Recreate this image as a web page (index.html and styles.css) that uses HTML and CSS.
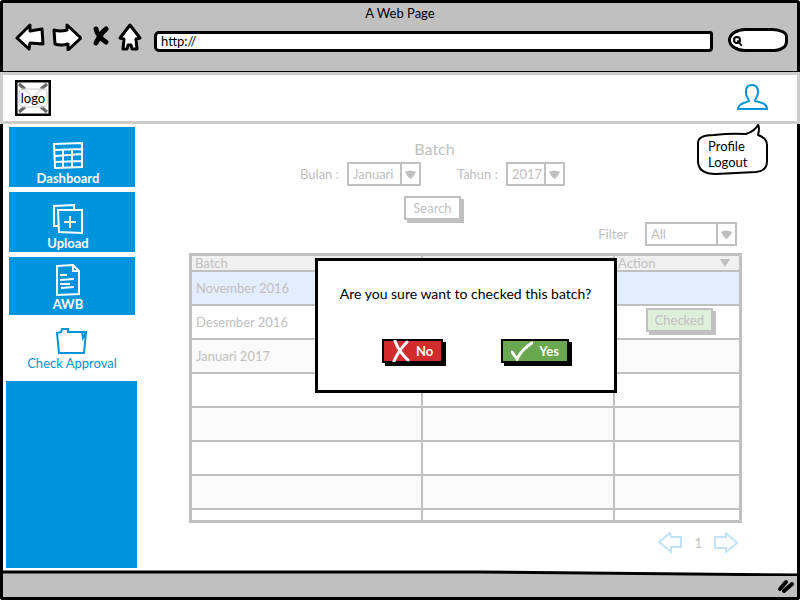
FILE: index.html
```
<!DOCTYPE html>
<html lang="id">
<head>
<meta charset="utf-8">
<meta name="viewport" content="width=device-width, initial-scale=1">
<title>A Web Page</title>
<link rel="stylesheet" href="styles.css">
</head>
<body>
<div class="window">
  <header class="chrome">
    <div class="window-title">A Web Page</div>
    <div class="toolbar">
      <button class="tool" type="button" aria-label="Back"><svg width="30" height="28" viewBox="0 0 30 28"><path d="M2 15 L15 2 V8 L27 6 L28 21 L15 20 L14 26 Z"/></svg></button>
      <button class="tool tool-forward" type="button" aria-label="Forward"><svg width="30" height="28" viewBox="0 0 30 28"><path d="M2 7 Q8 9 15 7 V2 L29 15 L16 27 V21 Q9 23 3 21 Z"/></svg></button>
      <button class="tool tool-stop" type="button" aria-label="Stop"><svg width="18" height="22" viewBox="0 0 18 22"><path class="solid" d="M4 3 Q6 11 14 16 M14 3 Q9 7 4 17"/></svg></button>
      <button class="tool tool-home" type="button" aria-label="Home"><svg width="24" height="28" viewBox="0 0 24 28"><path d="M2 15 L12 2 L22 15 L18 16 L19 26 H14 L13 22 H10 L9 26 H5 L6 16 Z"/></svg></button>
      <input class="address" type="text" value="http://" aria-label="Address">
      <label class="search"><svg width="14" height="16" viewBox="0 0 14 16"><circle cx="6" cy="8" r="3"/><path d="M7 9 L10 13"/></svg><input type="text" aria-label="Web search"></label>
    </div>
  </header>

  <div class="app-bar">
    <a class="logo" href="#">
      <svg width="36" height="36" viewBox="0 0 36 36" aria-hidden="true"><rect x="1" y="1" width="34" height="34" fill="#fff" stroke="#000" stroke-width="3"/><path d="M5 5 L31 31 M31 5 L5 31" stroke="#ccc" stroke-width="3"/><path d="M4 4 L10 9 M32 4 L26 9 M4 32 L10 27 M32 32 L26 27" stroke="#666" stroke-width="3"/><rect x="4" y="9" width="28" height="18" rx="4" fill="#fff" fill-opacity=".6" stroke="#ccc"/></svg>
      <span>logo</span>
    </a>
    <div class="account">
      <button class="avatar" type="button" aria-label="Account"><svg width="32" height="28" viewBox="0 0 32 28"><path d="M2 26 C2 22 5 21 13 18 C13 15 9 14 10 8 C10 3 13 2 16 2 C20 2 22 5 22 9 C22 14 19 15 19 18 C27 20 31 21 31 26 Z"/></svg></button>
      <nav class="bubble" aria-label="Account">
        <svg width="72" height="52" viewBox="0 0 72 52" aria-hidden="true"><path d="M2 20 C2 15 8 12 18 12 Q35 10 50 11 Q59 8 62 2 Q64 4 62 12 Q71 15 71 22 V38 Q71 48 60 49 L20 51 Q2 51 2 38 Z"/></svg>
        <a href="#">Profile</a>
        <a href="#">Logout</a>
      </nav>
    </div>
  </div>

  <div class="content">
    <nav class="sidebar" aria-label="Main">
      <a class="item" href="#"><svg width="32" height="28" viewBox="0 0 32 28"><path d="M2 2 L30 1 V25 L3 26 Z M2 8 L30 7 M3 14 L30 12 M3 20 L30 19 M11 8 V26 M20 8 V25"/></svg>Dashboard</a>
      <a class="item" href="#"><svg width="32" height="31" viewBox="0 0 32 31"><path d="M6 22 L2 22 V2 L22 1 V6 M6 6 L30 6 V29 L7 28 Z M18 12 V24 M12 18 H24"/></svg>Upload</a>
      <a class="item item-awb" href="#"><svg width="26" height="32" viewBox="0 0 26 32"><path d="M2 2 L18 1 L24 7 V30 L2 31 Z M18 1 V7 H24 M5 11 H12 M5 16 L19 15 M5 20 H15 M6 24 L19 23"/></svg>AWB</a>
      <a class="item item-current" href="#" aria-current="page"><svg width="32" height="28" viewBox="0 0 32 28"><path d="M3 26 L1 6 L5 5 L6 2 H12 V5 L30 5 L28 26 Z M26 5 L27 11 L30 5"/></svg>Check Approval</a>
      <div class="sidebar-fill"></div>
    </nav>

    <main class="main">
      <h1>Batch</h1>
      <form class="filters">
        <div class="period">
          <label for="bulan">Bulan :</label>
          <span class="picker"><select id="bulan" class="pick-month"><option>Januari</option></select><svg width="17" height="20" viewBox="0 0 17 20"><path d="M3 8 Q8 5 14 8 Q11 14 8 15 Q5 12 3 8"/></svg></span>
          <label class="year-label" for="tahun">Tahun :</label>
          <span class="picker"><select id="tahun" class="pick-year"><option>2017</option></select><svg width="17" height="20" viewBox="0 0 17 20"><path d="M3 8 Q8 5 14 8 Q11 14 8 15 Q5 12 3 8"/></svg></span>
        </div>
        <button class="button" type="button">Search</button>
        <div class="status">
          <label for="filter">Filter</label>
          <span class="picker"><select id="filter" class="pick-status"><option>All</option></select><svg width="17" height="20" viewBox="0 0 17 20"><path d="M3 8 Q8 5 14 8 Q11 14 8 15 Q5 12 3 8"/></svg></span>
        </div>
      </form>

      <div class="results">
        <table>
          <colgroup><col class="col-batch"><col class="col-mid"><col></colgroup>
          <thead><tr><th>Batch</th><th></th><th><span class="sortable">Action<svg width="10" height="8" viewBox="0 0 10 8"><path d="M0 0 H10 L5 8 Z"/></svg></span></th></tr></thead>
          <tbody>
            <tr class="selected"><td>November 2016</td><td></td><td></td></tr>
            <tr><td>Desember 2016</td><td></td><td class="action"><button class="button button-checked" type="button">Checked</button></td></tr>
            <tr><td>Januari 2017</td><td></td><td></td></tr>
            <tr><td></td><td></td><td></td></tr>
            <tr><td></td><td></td><td></td></tr>
            <tr><td></td><td></td><td></td></tr>
            <tr><td></td><td></td><td></td></tr>
            <tr class="last"><td></td><td></td><td></td></tr>
          </tbody>
        </table>
        <div class="dialog" role="dialog" aria-labelledby="question">
          <p id="question">Are you sure want to checked this batch?</p>
          <div class="choices">
            <button class="choice no" type="button"><svg width="18" height="22" viewBox="0 0 18 22"><path d="M3 1 Q7 12 16 20 M15 2 Q7 10 2 21"/></svg>No</button>
            <button class="choice yes" type="button"><svg width="22" height="20" viewBox="0 0 22 20"><path d="M1 11 L6 18 Q11 8 21 2"/></svg>Yes</button>
          </div>
        </div>
      </div>

      <nav class="pager" aria-label="Pages">
        <button type="button" aria-label="Previous"><svg width="24" height="22" viewBox="0 0 24 22"><path d="M1 10 L12 1 L13 5 L23 5 V15 L13 15 V20 Z"/></svg></button>
        <span>1</span>
        <button type="button" aria-label="Next"><svg width="24" height="22" viewBox="0 0 24 22"><path d="M1 5 L12 5 V1 L23 11 L12 20 V16 L1 16 Z"/></svg></button>
      </nav>
    </main>
  </div>

  <footer class="status-bar">
    <svg class="edge" height="6" viewBox="0 0 800 6" preserveAspectRatio="none"><path d="M0 0 H800 V4 L480 1 H0 Z" fill="#fff"/><path d="M0 2 L480 2 L800 5" fill="none" stroke="#000" stroke-width="3"/></svg>
    <svg class="grip" width="20" height="16" viewBox="0 0 20 16"><path d="M3 11 L9 4 M7 13 L15 6" /></svg>
  </footer>
</div>
</body>
</html>
```
FILE: styles.css
```
* { box-sizing: border-box; }

body {
  margin: 0;
  background: #fff;
  color: #000;
  font: 13px/16px Lato, "Liberation Sans", sans-serif;
}

button, input, select { font: inherit; color: inherit; }
button { cursor: pointer; }
a { color: inherit; text-decoration: none; }
svg { display: block; flex: none; fill: none; }

.window { display: flex; flex-direction: column; min-height: 100vh; }

.chrome {
  height: 72px;
  padding-top: 2px;
  border: 3px solid #000;
  border-bottom-width: 1px;
  border-radius: 3px 3px 0 0;
  background: #c0c0c0;
}
.window-title { text-align: center; }
.toolbar { display: flex; align-items: center; height: 28px; margin-top: 2px; padding: 0 9px 0 12px; }
.tool { padding: 0; border: 0; background: none; }
.tool path { fill: #fff; stroke: #000; stroke-width: 3px; stroke-linejoin: round; }
.tool .solid { fill: none; stroke-width: 5px; stroke-linecap: round; }
.tool-forward { margin-left: 7px; }
.tool-stop { margin-left: 10px; }
.tool-home { margin-left: 8px; }
.address {
  flex: 1;
  min-width: 0;
  height: 21px;
  margin: 8px 15px 0 12px;
  padding: 0 4px;
  border: 3px solid #000;
  border-radius: 5px 3px 4px 5px;
  background: #fff;
}
.search {
  display: flex;
  align-items: center;
  width: 60px;
  height: 24px;
  margin-top: 6px;
  border: 3px solid #000;
  border-radius: 20px 18px 16px 20px / 14px 10px 12px 14px;
  background: #fff;
}
.search svg { stroke: #000; stroke-width: 2px; stroke-linecap: round; }
.search input { width: 100%; min-width: 0; padding: 0; border: 0; background: none; outline: 0; }

.app-bar {
  display: flex;
  align-items: center;
  justify-content: space-between;
  height: 52px;
  padding: 0 29px 0 12px;
  border: 3px solid #ccc;
  background: #fff;
}
.logo { display: grid; place-items: center; }
.logo > * { grid-area: 1 / 1; }
.account { position: relative; }
.avatar { padding: 0; border: 0; background: none; }
.avatar path { stroke: #0094dc; stroke-width: 2px; }
.bubble {
  position: absolute;
  z-index: 2;
  top: 40px;
  right: 0;
  display: flex;
  flex-direction: column;
  width: 72px;
  height: 52px;
  padding: 15px 0 0 12px;
}
.bubble svg { position: absolute; z-index: -1; inset: 0; }
.bubble path { fill: #fff; stroke: #000; stroke-width: 2px; stroke-linejoin: round; }

.content {
  display: flex;
  flex: 1;
  border: solid #000;
  border-width: 0 3px;
}

.sidebar { display: flex; flex-direction: column; gap: 5px; width: 134px; padding: 3px 0 2px 3px; }
.item {
  display: flex;
  flex-direction: column;
  align-items: center;
  justify-content: flex-end;
  height: 60px;
  margin: 0 2px 0 3px;
  padding: 0 8px 1px 0;
  background: #0094dc;
  color: #fff;
  font-weight: 700;
}
.item path { stroke: currentColor; stroke-width: 2px; }
.item-awb { height: 58px; padding-bottom: 3px; }
.item-current { height: 56px; padding: 0 0 5px; background: #fff; color: #0094dc; font-weight: 400; }
.sidebar-fill { flex: 1; background: #0094dc; }

.main { flex: 1; min-width: 0; padding: 16px 55px 0 52px; color: #c0c0c0; }
h1 { margin: 0 62px 0 0; font-size: 16px; font-weight: 400; line-height: 18px; text-align: center; }
.filters { display: flex; flex-direction: column; align-items: center; }
.period { display: flex; align-items: center; gap: 8px; margin: 4px 66px 0 0; }
.year-label { margin-left: 28px; }
.picker { display: flex; border: 2px solid #c0c0c0; }
.picker select {
  height: 20px;
  padding: 0 0 0 4px;
  border: 0;
  border-right: 2px solid #c0c0c0;
  border-radius: 0;
  background: #fff;
  appearance: none;
}
.picker path { fill: #c0c0c0; }
.pick-month { width: 53px; }
.pick-year { width: 38px; }
.pick-status { width: 71px; }
.button {
  height: 24px;
  padding: 0 7px;
  border: 2px solid #c0c0c0;
  background: #fff;
  box-shadow: 3px 3px 0 #c0c0c0;
}
.filters > .button { margin: 10px 66px 0 0; }
.status { display: flex; align-items: center; align-self: flex-end; gap: 17px; margin: 2px 5px 7px 0; }

.results { position: relative; }
table {
  width: 100%;
  border: 3px solid #c0c0c0;
  border-collapse: collapse;
  table-layout: fixed;
}
.col-batch { width: 42%; }
.col-mid { width: 35%; }
th, td { padding: 0 4px; border: 2px solid #c0c0c0; text-align: left; font-weight: 400; }
th { height: 16px; padding: 0 3px; background: #f0f0f0; line-height: 14px; }
.sortable { display: flex; align-items: center; justify-content: space-between; padding-right: 6px; }
.sortable path { fill: #c0c0c0; }
td { height: 34px; }
tbody tr:nth-child(odd) { background: #fafafa; }
tbody .selected:nth-child(odd) { background: #e4edfd; }
tbody .last td { height: 12px; }
.action { padding: 0 26px 4px 4px; text-align: right; }
.button-checked { background: #dfeeda; }

.dialog {
  position: absolute;
  top: 5px;
  left: 50%;
  width: 302px;
  height: 135px;
  padding-top: 25px;
  border: 3px solid #000;
  background: #fff;
  color: #000;
  transform: translateX(-50%);
}
.dialog p { margin: 0; font-size: 14px; text-align: center; }
.choices { display: flex; justify-content: center; gap: 58px; padding: 37px 0 0 20px; }
.choice {
  display: flex;
  align-items: center;
  gap: 6px;
  height: 24px;
  padding: 0 8px;
  border: 2px solid #000;
  box-shadow: 3px 3px 0 #000;
  color: #fff;
  font-weight: 700;
}
.choice path { stroke: #fff; stroke-width: 3px; stroke-linecap: round; }
.no { background: #d02c2c; }
.yes { background: #6aa84f; }

.pager { display: flex; align-items: center; justify-content: flex-end; gap: 12px; padding: 9px 4px 0 0; }
.pager button { padding: 0; border: 0; background: none; }
.pager path { stroke: #bfe4f7; stroke-width: 2px; }

.status-bar {
  display: flex;
  flex-direction: column;
  align-items: flex-end;
  height: 30px;
  border: 3px solid #000;
  border-top: 0;
  border-radius: 0 0 3px 3px;
  background: #c0c0c0;
}
.edge { width: 100%; }
.grip { margin-top: 2px; }
.grip path { stroke: #000; stroke-width: 4px; stroke-linecap: round; }
```
